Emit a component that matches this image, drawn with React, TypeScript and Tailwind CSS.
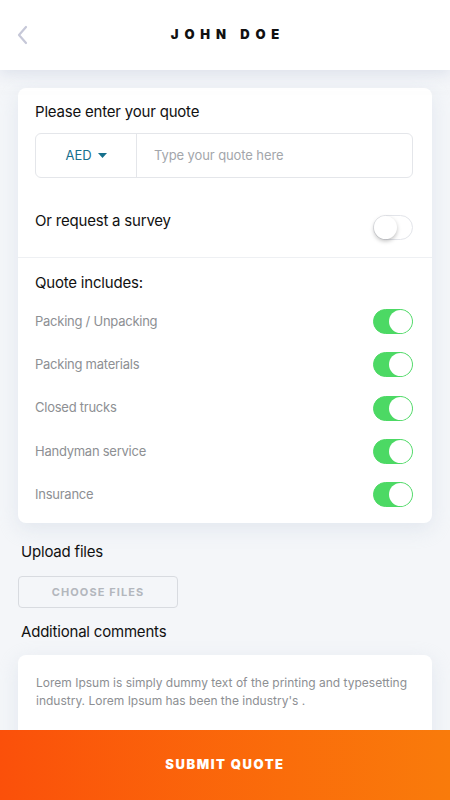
import React, { useState } from 'react';

const font = { fontFamily: 'Inter, "Noto Sans", sans-serif' };

const Toggle: React.FC<{ on: boolean; onChange: () => void }> = ({ on, onChange }) => (
  <button
    onClick={onChange}
    className={
      on
        ? 'relative w-[40px] h-[25px] rounded-full bg-[#4cd964] border border-[#4cd964]'
        : 'relative w-[40px] h-[25px] rounded-full bg-white border border-[#e3e5ea]'
    }
  >
    <span
      className={
        on
          ? 'absolute top-[0px] right-[0px] w-[23px] h-[23px] rounded-full bg-white'
          : 'absolute top-[0px] left-[0px] w-[23px] h-[23px] rounded-full bg-white shadow-[0_2px_4px_rgba(0,0,0,0.25)]'
      }
    />
  </button>
);

const items = ['Packing / Unpacking', 'Packing materials', 'Closed trucks', 'Handyman service', 'Insurance'];

export default function App() {
  const [survey, setSurvey] = useState(false);
  const [included, setIncluded] = useState<boolean[]>(items.map(() => true));

  return (
    <div className="h-[800px] w-full flex flex-col bg-[#f4f6f9] overflow-hidden" style={font}>
      <header className="h-[70px] shrink-0 bg-white flex items-center relative z-10 shadow-[0_4px_14px_rgba(200,208,222,0.55)]">
        <button className="absolute left-[15px] top-[25px] text-[#c6c8d8]">
          <svg width="16" height="20" viewBox="0 0 16 20" fill="none">
            <path d="M11 2 L4 10 L11 18" stroke="currentColor" strokeWidth="2.2" strokeLinecap="round" strokeLinejoin="round" />
          </svg>
        </button>
        <h1 className="w-full text-center text-[13px] font-black tracking-[0.45em] text-[#111] pl-[6px]">JOHN DOE</h1>
      </header>

      <main className="flex-1 overflow-hidden px-[18px] pt-[18px]">
        <section className="bg-white rounded-[8px] shadow-[0_6px_20px_rgba(205,212,226,0.45)]">
          <div className="pl-[17px] pr-[19px] pt-[15px]">
            <p className="text-[15px] text-[#111] leading-[18px] tracking-[-0.2px]">Please enter your quote</p>
            <div className="mt-[12px] h-[45px] flex border border-[#e4e6ea] rounded-[6px]">
              <button className="w-[101px] shrink-0 flex items-center justify-center gap-[6px] border-r border-[#e4e6ea] text-[13px] text-[#16708c]">
                AED
                <svg width="9" height="5" viewBox="0 0 9 5"><path d="M0 0 H9 L4.5 5 Z" fill="#16708c" /></svg>
              </button>
              <input
                placeholder="Type your quote here"
                className="flex-1 min-w-0 px-[17px] text-[13px] text-[#333] placeholder:text-[#a3a6ab] outline-none bg-transparent rounded-r-[6px] tracking-[-0.1px]"
              />
            </div>
            <div className="mt-[37px] pb-[17px] flex items-center justify-between">
              <p className="text-[15px] text-[#111] -mt-[12px] tracking-[-0.2px]">Or request a survey</p>
              <Toggle on={survey} onChange={() => setSurvey(!survey)} />
            </div>
          </div>
          <div className="border-t border-[#eef0f3]" />
          <div className="pl-[17px] pr-[19px] pt-[15px] pb-[16px]">
            <p className="text-[15px] text-[#111] leading-[20px] tracking-[-0.2px]">Quote includes:</p>
            <ul className="mt-[16px] flex flex-col gap-[18.25px]">
              {items.map((label, i) => (
                <li key={label} className="flex items-center justify-between">
                  <span className="text-[13px] text-[#8d8f93] tracking-[-0.25px]">{label}</span>
                  <Toggle
                    on={included[i]}
                    onChange={() => setIncluded(included.map((v, j) => (j === i ? !v : v)))}
                  />
                </li>
              ))}
            </ul>
          </div>
        </section>

        <p className="mt-[19px] pl-[3px] text-[15px] text-[#111] leading-[20px] tracking-[-0.2px]">Upload files</p>
        <button className="mt-[14px] w-[160px] h-[32px] rounded-[4px] border border-[#d8dbe0] text-[11px] font-bold tracking-[0.1em] text-[#b3b7bd]">
          CHOOSE FILES
        </button>
        <p className="mt-[14px] pl-[3px] text-[15px] text-[#111] leading-[20px] tracking-[-0.2px]">Additional comments</p>

        <div className="mt-[13px] bg-white rounded-[8px] shadow-[0_6px_20px_rgba(205,212,226,0.45)] px-[18px] pt-[19px] pb-[40px]">
          <p className="text-[12px] leading-[18px] text-[#8d8f93]">
            Lorem Ipsum is simply dummy text of the printing and typesetting industry. Lorem Ipsum has been the industry's .
          </p>
        </div>
      </main>

      <button className="h-[70px] shrink-0 w-full bg-gradient-to-r from-[#fb500a] to-[#f97b0b] text-white text-[13px] font-black tracking-[0.12em]">
        SUBMIT QUOTE
      </button>
    </div>
  );
}
